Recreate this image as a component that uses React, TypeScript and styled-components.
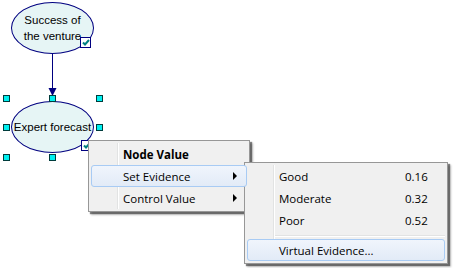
import React from "react";
import styled, { createGlobalStyle } from "styled-components";

const Global = createGlobalStyle`
  html, body { margin: 0; padding: 0; background: #ffffff; }
  #root { width: 453px; height: 268px; }
`;

const Canvas = styled.div`
  position: relative;
  width: 453px;
  height: 268px;
  overflow: hidden;
  background: #ffffff;
  font-family: "Liberation Sans", Arial, sans-serif;
`;

const Node = styled.div<{ $x: number; $y: number }>`
  position: absolute;
  left: ${(p) => p.$x}px;
  top: ${(p) => p.$y}px;
  width: 81px;
  height: 50px;
  border: 1px solid #000080;
  border-radius: 50%;
  background: #e6f5f5;
  display: flex;
  align-items: center;
  justify-content: center;
  text-align: center;
  font-size: 11.5px;
  line-height: 16px;
  color: #000000;
  white-space: nowrap;
`;

const Check = styled.div<{ $x: number; $y: number }>`
  position: absolute;
  left: ${(p) => p.$x}px;
  top: ${(p) => p.$y}px;
  width: 9px;
  height: 9px;
  border: 1px solid #000080;
  background: #ffffff;
  display: flex;
  align-items: center;
  justify-content: center;
`;

const Handle = styled.div<{ $x: number; $y: number }>`
  position: absolute;
  left: ${(p) => p.$x}px;
  top: ${(p) => p.$y}px;
  width: 5px;
  height: 5px;
  border: 1px solid #003c3c;
  background: #00f0f0;
`;

const Edge = styled.svg`
  position: absolute;
  left: 0;
  top: 0;
`;

const Menu = styled.div<{ $x: number; $y: number; $w: number }>`
  position: absolute;
  left: ${(p) => p.$x}px;
  top: ${(p) => p.$y}px;
  width: ${(p) => p.$w}px;
  box-sizing: border-box;
  border: 1px solid #979797;
  background: #f0f0f0;
  padding: 2px;
  box-shadow: 2px 2px 1px rgba(0, 0, 0, 0.45), 3px 3px 2px rgba(0, 0, 0, 0.25);
  display: flex;
  flex-direction: column;
  font-family: "Open Sans", "Segoe UI", sans-serif;
  font-size: 11.5px;
  color: #000000;
  &::before {
    content: "";
    position: absolute;
    left: 28px;
    top: 2px;
    bottom: 2px;
    width: 1px;
    background: #e2e3e3;
    box-shadow: 1px 0 0 #ffffff;
  }
`;

const Item = styled.div<{ $hot?: boolean; $bold?: boolean }>`
  position: relative;
  z-index: 1;
  height: 22px;
  box-sizing: border-box;
  display: flex;
  align-items: center;
  padding-left: 31px;
  padding-right: 8px;
  border: 1px solid ${(p) => (p.$hot ? "#a8cbf4" : "transparent")};
  border-radius: 3px;
  background: ${(p) =>
    p.$hot ? "linear-gradient(#f0f5fc, #e2ebf7)" : "transparent"};
  font-weight: ${(p) => (p.$bold ? 700 : 400)};
  white-space: nowrap;
`;

const Label = styled.span`
  flex: 1;
`;

const Value = styled.span`
  width: 31px;
`;

const Arrow = styled.span`
  width: 0;
  height: 0;
  border-top: 4px solid transparent;
  border-bottom: 4px solid transparent;
  border-left: 4px solid #000000;
  margin-right: 1px;
`;

const Separator = styled.div`
  height: 8px;
  display: flex;
  align-items: center;
  padding-left: 27px;
  &::after {
    content: "";
    flex: 1;
    height: 1px;
    background: #e2e3e3;
    box-shadow: 0 1px 0 #ffffff;
  }
`;

const CheckMark = () => (
  <svg width="8" height="7" viewBox="0 0 8 7">
    <path d="M1 3.5 L3 5.5 L7 1" stroke="#008080" strokeWidth="2" fill="none" />
  </svg>
);

const handles: [number, number][] = [
  [3, 95], [49, 95], [96, 95],
  [3, 124], [96, 124],
  [3, 154], [49, 154], [96, 154],
];

export default function App() {
  return (
    <>
      <Global />
      <Canvas>
        <Edge width="453" height="268">
          <line x1="52.5" y1="52" x2="52.5" y2="90" stroke="#000080" strokeWidth="1" />
          <path d="M48.5 88 L56.5 88 L52.5 96 Z" fill="#000080" />
        </Edge>
        <Node $x={11} $y={2}>
          Success of
          <br />
          the venture
        </Node>
        <Check $x={80} $y={37}>
          <CheckMark />
        </Check>
        <Node $x={11} $y={101}>Expert forecast</Node>
        <Check $x={81} $y={140}>
          <CheckMark />
        </Check>
        {handles.map(([x, y], i) => (
          <Handle key={i} $x={x} $y={y} />
        ))}
        <Menu $x={88} $y={140} $w={162}>
          <Item $bold>
            <Label>Node Value</Label>
          </Item>
          <Item $hot>
            <Label>Set Evidence</Label>
            <Arrow />
          </Item>
          <Item>
            <Label>Control Value</Label>
            <Arrow />
          </Item>
        </Menu>
        <Menu $x={244} $y={162} $w={204}>
          <Item>
            <Label>Good</Label>
            <Value>0.16</Value>
          </Item>
          <Item>
            <Label>Moderate</Label>
            <Value>0.32</Value>
          </Item>
          <Item>
            <Label>Poor</Label>
            <Value>0.52</Value>
          </Item>
          <Separator />
          <Item $hot>
            <Label>Virtual Evidence...</Label>
          </Item>
        </Menu>
      </Canvas>
    </>
  );
}
